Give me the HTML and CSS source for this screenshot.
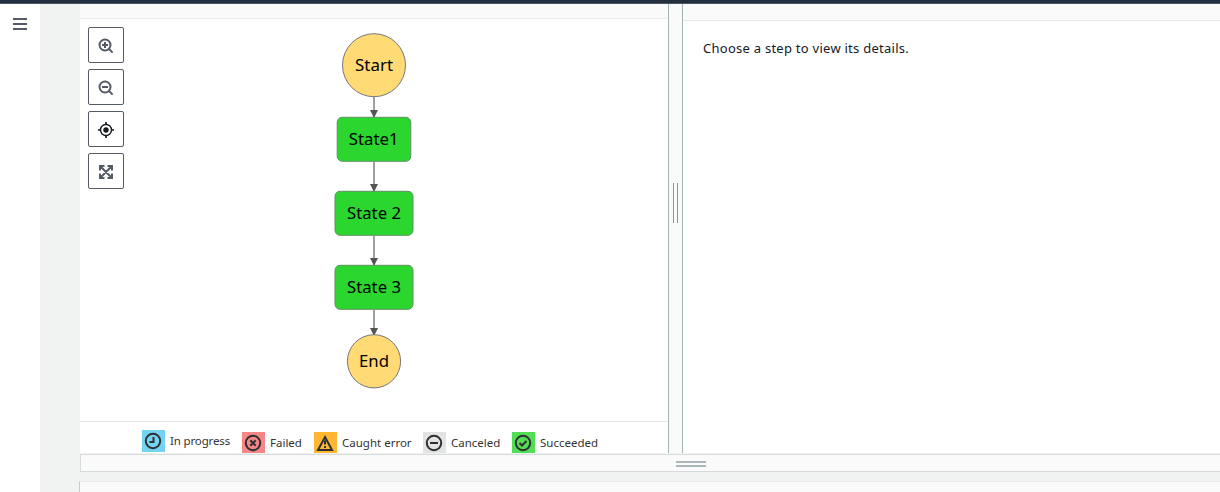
FILE: index.html
```html
<!DOCTYPE html>
<html lang="en">
<head>
<meta charset="utf-8">
<title>Execution graph</title>
<link rel="stylesheet" href="styles.css">
</head>
<body>
<header class="topbar"></header>
<div class="shell">
  <nav class="rail">
    <svg class="menu" width="14" height="12" viewBox="0 0 14 12"><path d="M0 1h14M0 6h14M0 11h14" stroke="#545b64" stroke-width="2"/></svg>
  </nav>
  <main class="main">
    <div class="split">
      <section class="graph-pane">
        <div class="graph-head"></div>
        <div class="graph-body">
          <div class="tools">
            <button class="tool" aria-label="Zoom in"><svg width="16" height="16" viewBox="0 0 16 16" fill="none" stroke="#545b64" stroke-width="2"><circle cx="7" cy="7" r="5.5"/><path d="M11 11l3.6 3.6M4 7h6M7 4v6"/></svg></button>
            <button class="tool" aria-label="Zoom out"><svg width="16" height="16" viewBox="0 0 16 16" fill="none" stroke="#545b64" stroke-width="2"><circle cx="7" cy="7" r="5.5"/><path d="M11 11l3.6 3.6M4 7h6"/></svg></button>
            <button class="tool" aria-label="Center"><svg width="16" height="16" viewBox="0 0 16 16" fill="none" stroke="#16191f" stroke-width="1.4"><circle cx="8" cy="8" r="5.5"/><circle cx="8" cy="8" r="2.7" fill="#16191f" stroke="none"/><path d="M8 0v3M8 13v3M0 8h3M13 8h3" stroke-width="1.7"/></svg></button>
            <button class="tool" aria-label="Fit"><svg width="16" height="16" viewBox="0 0 16 16" fill="none" stroke="#545b64" stroke-width="2"><path d="M2 6.5V2h4.500M9.500 2H14v4.500M14 9.500V14H9.500M6.500 14H2V9.500M2.500 2.500l11 11M13.500 2.500l-11 11"/></svg></button>
          </div>
          <svg class="graph" width="120" height="370" viewBox="314 26 120 370">
            <defs><marker id="arrow" markerUnits="userSpaceOnUse" markerWidth="8" markerHeight="8" refX="8" refY="4" orient="auto"><path d="M0 0l8 4-8 4z" fill="#545454"/></marker></defs>
            <g class="edges">
              <path d="M374 97v21"/><path d="M374 162v30"/><path d="M374 236v30"/><path d="M374 310v26"/>
            </g>
            <g class="terminal"><circle cx="374" cy="65.200" r="31.500"/><circle cx="374" cy="361.300" r="26.600"/></g>
            <g class="state">
              <rect x="337.200" y="117.300" width="73.600" height="44" rx="5"/>
              <rect x="335" y="191.300" width="78" height="44" rx="5"/>
              <rect x="335" y="265.300" width="78" height="44" rx="5"/>
            </g>
            <g class="labels">
              <text x="355" y="71" textLength="38" lengthAdjust="spacingAndGlyphs">Start</text>
              <text x="348.700" y="145" textLength="50" lengthAdjust="spacingAndGlyphs">State1</text>
              <text x="347" y="219" textLength="54" lengthAdjust="spacingAndGlyphs">State 2</text>
              <text x="347" y="293" textLength="54" lengthAdjust="spacingAndGlyphs">State 3</text>
              <text x="359" y="367" textLength="30" lengthAdjust="spacingAndGlyphs">End</text>
            </g>
          </svg>
        </div>
        <div class="legend">
          <div class="key first"><span class="swatch progress"><svg width="18" height="18" viewBox="0 0 18 18"><circle cx="9" cy="9" r="7.200"/><path d="M9.500 5v5H5.500"/></svg></span><span>In progress</span></div>
          <div class="key"><span class="swatch failed"><svg width="18" height="18" viewBox="0 0 18 18"><circle cx="9" cy="9" r="7.200"/><path d="M6.300 6.300l5.400 5.400M11.700 6.300l-5.400 5.400"/></svg></span><span>Failed</span></div>
          <div class="key"><span class="swatch caught"><svg width="18" height="18" viewBox="0 0 18 18"><path d="M9 3L16 16H2zM9 6.500v4M9 12v2"/></svg></span><span>Caught error</span></div>
          <div class="key"><span class="swatch canceled"><svg width="18" height="18" viewBox="0 0 18 18"><circle cx="9" cy="9" r="7.200"/><path d="M5 9h8"/></svg></span><span>Canceled</span></div>
          <div class="key"><span class="swatch succeeded"><svg width="18" height="18" viewBox="0 0 18 18"><circle cx="9" cy="9" r="7.200"/><path d="M5.500 9l2.500 2.500L12.500 7"/></svg></span><span>Succeeded</span></div>
        </div>
      </section>
      <div class="gutter"><span class="grip"></span></div>
      <section class="details">
        <div class="details-head"></div>
        <p class="hint">Choose a step to view its details.</p>
      </section>
    </div>
    <div class="resizer"><span class="bar-grip"></span></div>
    <section class="next-panel"></section>
  </main>
</div>
</body>
</html>
```
FILE: styles.css
```css
* { box-sizing: border-box; }
body {
  margin: 0;
  height: 492px;
  overflow: hidden;
  background: #f1f3f3;
  color: #16191f;
  font-family: "Noto Sans", "Open Sans", sans-serif;
}
svg { display: block; }
.topbar { height: 4px; background: #232f3e; border-bottom: 1px solid #4b5562; }
.shell { display: flex; height: 488px; }
.rail { width: 40px; background: #fff; padding: 14px 13px; }
.main { flex: 1; display: flex; flex-direction: column; padding-left: 39px; }
.split { display: flex; height: 449px; margin-left: 1px; }
.graph-pane { width: 588px; background: #fff; display: flex; flex-direction: column; }
.graph-head { height: 15px; background: #fafafa; border-bottom: 1px solid #eaeded; }
.graph-body { flex: 1; display: flex; padding: 8px; }
.tools { display: flex; flex-direction: column; gap: 6px; width: 36px; }
.tool {
  width: 36px;
  height: 36px;
  padding: 2px 0 0;
  display: flex;
  align-items: center;
  justify-content: center;
  background: #fff;
  border: 1px solid #545b64;
  border-radius: 2px;
}
.graph { margin: -1px 0 0 190px; }
.edges path { stroke: #808080; stroke-width: 1.500px; marker-end: url(#arrow); }
.terminal { fill: #ffda75; stroke: #777; stroke-width: 1px; }
.state { fill: #2bd62e; stroke: #5f8f60; stroke-width: 1px; }
.labels { font-size: 16.500px; fill: #000; }
.legend {
  height: 32px;
  border-top: 1px solid #e4e7e7;
  padding: 10px 0 0 62px;
  display: grid;
  grid-template-columns: 100px 72px 109px 89px 100px;
  font-size: 11.500px;
  line-height: 22px;
  white-space: nowrap;
  color: #333;
}
.key { display: flex; gap: 5px; height: 21px; }
.first { margin-top: -2px; height: 22px; letter-spacing: -0.150px; }
.swatch { width: 23px; height: 100%; padding: 2px; }
.swatch svg { fill: none; stroke: #2d3033; stroke-width: 2px; }
.progress { background: #75d3f2; }
.failed { background: #f78686; }
.caught { background: #ffb733; }
.canceled { background: #e3e3e3; }
.succeeded { background: #53dc56; }
.gutter {
  width: 15px;
  background: #fafafa;
  border: solid #a2b4b3;
  border-width: 0 1px;
  padding: 179px 0 0 4px;
}
.grip { display: block; width: 5px; height: 40px; border: solid #879196; border-width: 0 1px; }
.details { flex: 1; background: #fff; }
.details-head { height: 17px; background: #fafafa; border-bottom: 1px solid #e2eae9; }
.hint { margin: 17px 0 0 20px; font-size: 13px; line-height: 20px; letter-spacing: 0.260px; }
.resizer {
  height: 18px;
  margin: 1px 0 9px 1px;
  background: #fafafa;
  border: solid #d5dbdb;
  border-width: 1px 0 1px 1px;
  padding: 6px 0 0 595px;
}
.bar-grip { display: block; width: 30px; height: 6px; border: solid #aab7b8; border-width: 2px 0; }
.next-panel { flex: 1; background: #fafafa; border-top: 1px solid #eaeded; border-left: 1px solid #c5cccc; }
```
